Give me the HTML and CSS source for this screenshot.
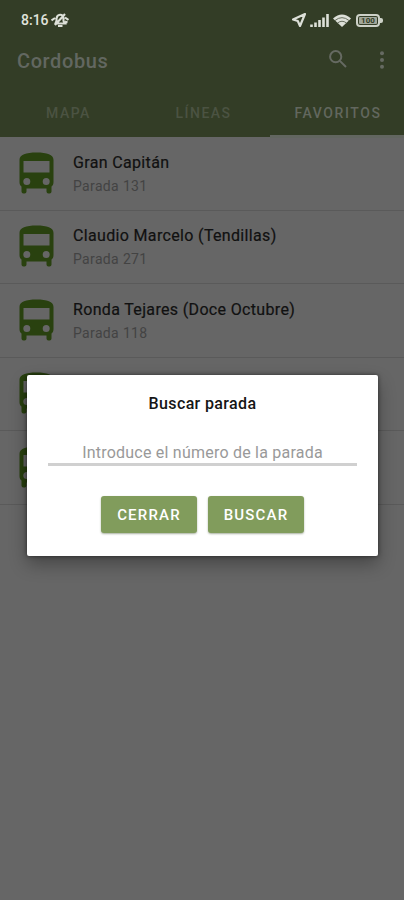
FILE: index.html
```
<!DOCTYPE html>
<html lang="es">
<head>
<meta charset="utf-8">
<title>Cordobus</title>
<link rel="stylesheet" href="styles.css">
</head>
<body>
<svg class="defs" aria-hidden="true">
  <symbol id="bus" viewBox="0 0 35 42">
    <path fill-rule="evenodd" d="M.5 8C.5 2.500 7 .5 17.500 .5S34.500 2.500 34.500 8V30C34.500 32 33.800 33.500 32.500 34.500V39.500Q32.500 41.500 30.500 41.500H29.500Q27.500 41.500 27.500 39.500V36.500H7.500V39.500Q7.500 41.500 5.500 41.500H4.500Q2.500 41.500 2.500 39.500V34.500C1.200 33.500 .5 32 .5 30ZM4.500 9V20.500H30.500V9ZM7.800 26a3.500 3.500 0 1 0 0 7a3.500 3.500 0 1 0 0-7ZM27.200 26a3.500 3.500 0 1 0 0 7a3.500 3.500 0 1 0 0-7Z"/>
  </symbol>
</svg>
<div class="screen">
  <header class="header">
    <div class="status">
      <span class="time">8:16</span>
      <svg class="mute" viewBox="0 0 18 16"><path d="M4.500 11.500L5.500 9V6.500Q6 3 9 2.800T12.500 6V9L14 11.500ZM7 14H11.500M14 2L4 13M.5 8.500L4 6M14 5.500L17.500 8M14 9.500L16.500 10.500"/></svg>
      <svg class="location" viewBox="0 0 14 14"><path d="M13 1L1 6.500L5.800 8L8 13Z"/></svg>
      <svg class="signal" viewBox="0 0 19 13"><path d="M1.500 13V10.500M5.500 13V8.500M9.500 13V6M13.500 13V3.500M17.500 13V0"/></svg>
      <svg class="wifi" viewBox="0 0 18 13"><path class="fan" d="M0 4.500Q9-3.500 18 4.500L9 13Z"/><path class="wave" d="M2 6.500Q9 .8 16 6.500M4.500 9Q9 5.500 13.500 9"/></svg>
      <span class="battery"><span class="level">100</span></span>
    </div>
    <div class="toolbar">
      <h1>Cordobus</h1>
      <svg class="search" viewBox="0 0 18 18"><circle cx="6.700" cy="6.700" r="5.600"/><path d="M10.900 10.900L17 17"/></svg>
      <svg class="more" viewBox="0 0 4 18"><circle cx="2" cy="2.300" r="2"/><circle cx="2" cy="9" r="2"/><circle cx="2" cy="15.700" r="2"/></svg>
    </div>
    <nav class="tabs">
      <span class="tab">MAPA</span>
      <span class="tab">LÍNEAS</span>
      <span class="tab active">FAVORITOS</span>
    </nav>
  </header>
  <main class="list">
    <div class="row"><svg class="bus"><use href="#bus"/></svg><div><div class="name">Gran Capitán</div><div class="stop">Parada 131</div></div></div>
    <div class="row"><svg class="bus"><use href="#bus"/></svg><div><div class="name">Claudio Marcelo (Tendillas)</div><div class="stop">Parada 271</div></div></div>
    <div class="row"><svg class="bus"><use href="#bus"/></svg><div><div class="name">Ronda Tejares (Doce Octubre)</div><div class="stop">Parada 118</div></div></div>
    <div class="row"><svg class="bus"><use href="#bus"/></svg></div>
    <div class="row"><svg class="bus"><use href="#bus"/></svg></div>
  </main>
  <section class="dialog" role="dialog">
    <h2>Buscar parada</h2>
    <div class="field">Introduce el número de la parada</div>
    <div class="actions">
      <button>CERRAR</button>
      <button>BUSCAR</button>
    </div>
  </section>
</div>
</body>
</html>
```
FILE: styles.css
```
* { box-sizing: border-box; }
body { margin: 0; font-family: Roboto, "Liberation Sans", sans-serif; background: #666; }
.defs { position: absolute; width: 0; height: 0; }
.screen { position: relative; width: 404px; height: 900px; overflow: hidden; background: #666; }

.header { height: 137px; background: #333d26; }
.status { display: flex; align-items: center; height: 40px; padding: 0 22px 0 21px; color: #e0e3dc; }
.status svg { fill: none; stroke: #dde0d8; }
.time { width: 28px; font-size: 14px; line-height: 16px; font-weight: 500; white-space: nowrap; }
.status .mute { width: 18px; height: 16px; margin-left: 2px; stroke-width: 2.1; }
.location { width: 14px; height: 14px; margin-left: auto; stroke-width: 2.2; stroke-linejoin: round; }
.signal { width: 19px; height: 13px; margin-left: 4px; stroke-width: 2.6; }
.wifi { width: 18px; height: 13px; margin-left: 4px; }
.wifi .fan { fill: #dde0d8; stroke: none; }
.wifi .wave { stroke: #59614f; stroke-width: .9; }
.battery { position: relative; display: flex; width: 24px; height: 13px; margin: 0 2px 0 5px; padding: 1px; border: 2px solid #cdd1c7; border-radius: 4px; }
.battery::after { content: ""; position: absolute; right: -5px; top: 2px; width: 3px; height: 5px; background: #cdd1c7; border-radius: 0 2px 2px 0; }
.level { flex: 1; background: #a2a79a; color: #333d26; font-size: 8px; line-height: 8px; font-weight: 700; text-align: center; border-radius: 1px; }

.toolbar { display: flex; align-items: center; height: 40px; padding: 0 20px 0 17px; }
.toolbar h1 { flex: 1; margin: 0; padding-top: 1px; color: #626760; font-size: 20px; line-height: 24px; font-weight: 500; letter-spacing: .6px; }
.search { width: 18px; height: 18px; margin-top: -2px; fill: none; stroke: #666a62; stroke-width: 2; }
.more { width: 4px; height: 18px; margin: -1px 0 0 33px; fill: #666a62; }

.tabs { display: grid; grid-template-columns: 135px 135px 134px; height: 58px; }
.tab { display: flex; align-items: center; justify-content: center; height: 58px; padding: 11px 0 0 2px; font-size: 14px; line-height: 18px; font-weight: 500; letter-spacing: 1.5px; color: #4b5342; border-bottom: 3px solid transparent; }
.active { color: #62675e; border-color: #626660; letter-spacing: 1.6px; }

.row { display: flex; height: 73.5px; padding: 14.500px 0 0 19px; border-bottom: 1px solid #5a5a5a; }
.bus { width: 35px; height: 42px; margin-right: 19px; fill: #29410f; }
.name { height: 23px; font-size: 16px; line-height: 22px; letter-spacing: .34px; color: #111; white-space: nowrap; -webkit-text-stroke: .2px #111; }
.stop { font-size: 14px; line-height: 23px; letter-spacing: .35px; color: #434343; }

.dialog { position: absolute; left: 27px; top: 375px; width: 351px; height: 181px; padding: 17px 21px 0; background: #fff; border-radius: 2px; box-shadow: 0 8px 18px rgba(0,0,0,.32), 0 0 4px rgba(0,0,0,.5); text-align: center; }
.dialog h2 { margin: 0; font-size: 16px; line-height: 24px; font-weight: 500; letter-spacing: .36px; color: #151515; }
.field { height: 32px; margin-top: 18px; border-bottom: 3px solid #d0d0d0; font-size: 16px; line-height: 38px; letter-spacing: .22px; color: #999; white-space: nowrap; }
.actions { display: flex; justify-content: center; gap: 11px; margin-top: 30px; }
.actions button { width: 96px; height: 37px; padding: 1px 0 0; border: 0; border-radius: 3px; background: #819c5c; box-shadow: 0 1px 2px rgba(40,60,20,.4); color: #fff; font: 500 15px/20px Roboto, "Liberation Sans", sans-serif; letter-spacing: 1.2px; }
```
